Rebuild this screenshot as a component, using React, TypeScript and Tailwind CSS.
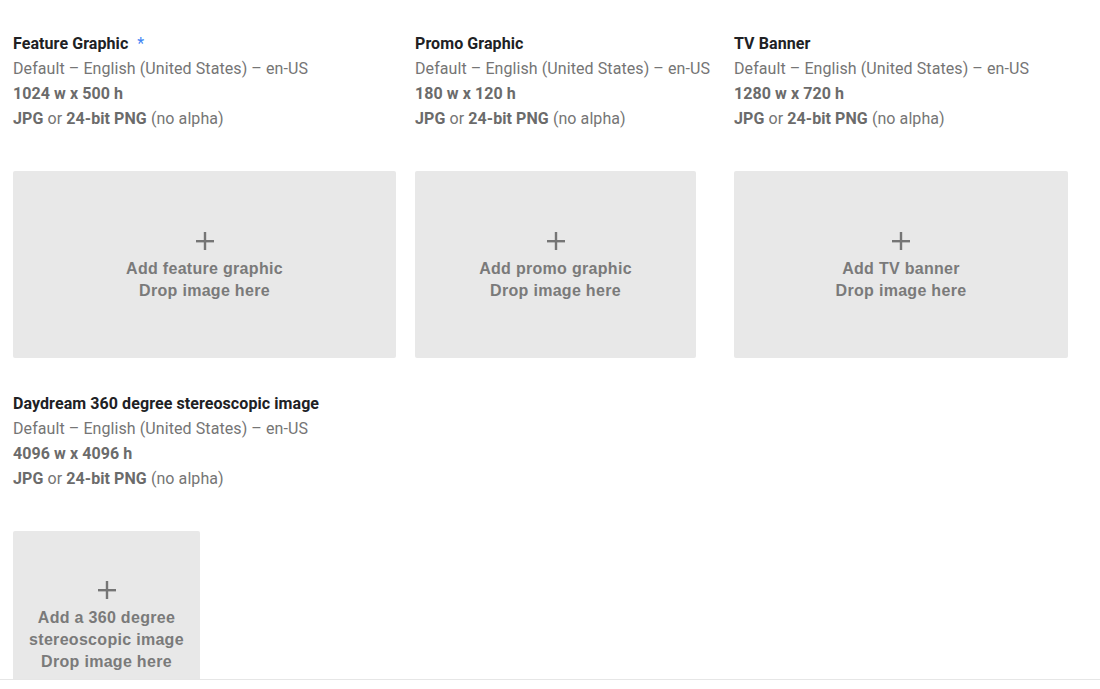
const assets = [
  [
    {
      title: "Feature Graphic",
      required: true,
      size: "1024 w x 500 h",
      box: "w-[383px]",
      col: "w-[383px]",
      lines: ["Add feature graphic"],
    },
    {
      title: "Promo Graphic",
      size: "180 w x 120 h",
      box: "w-[281px]",
      col: "w-[300px]",
      lines: ["Add promo graphic"],
    },
    {
      title: "TV Banner",
      size: "1280 w x 720 h",
      box: "w-[334px]",
      col: "w-[334px]",
      lines: ["Add TV banner"],
    },
  ],
  [
    {
      title: "Daydream 360 degree stereoscopic image",
      size: "4096 w x 4096 h",
      box: "w-[187px]",
      col: "w-[340px]",
      lines: ["Add a 360 degree", "stereoscopic image"],
    },
  ],
];

type Asset = {
  title: string;
  required?: boolean;
  size: string;
  box: string;
  col: string;
  lines: string[];
};

function Plus() {
  return (
    <svg width="18" height="18" viewBox="0 0 18 18" className="mb-[8px]">
      <rect x="0" y="8" width="18" height="2.4" fill="#757575" />
      <rect x="7.8" y="0" width="2.4" height="18" fill="#757575" />
    </svg>
  );
}

function AssetSlot({ a }: { a: Asset }) {
  return (
    <div className={`${a.col} shrink-0`}>
      <div className="text-[16px] leading-[25px] tracking-[0.08px] font-['Roboto',sans-serif]">
        <div className="font-bold text-[#202124]">
          {a.title}
          {a.required && <span className="ml-[9px] font-normal text-[#4285f4]">*</span>}
        </div>
        <div className="text-[#757575]">Default – English (United States) – en-US</div>
        <div className="font-bold text-[#6b6b6b]">{a.size}</div>
        <div className="text-[#757575]">
          <span className="font-bold text-[#6b6b6b]">JPG</span> or{" "}
          <span className="font-bold text-[#6b6b6b]">24-bit PNG</span> (no alpha)
        </div>
      </div>
      <div
        className={`${a.box} mt-[40px] flex h-[187px] flex-col items-center justify-center rounded-[2px] bg-[#e8e8e8] pt-[5px] text-center font-['Liberation_Sans',Arial,sans-serif] text-[16px] font-bold leading-[22px] tracking-[0.3px] text-[#7a7a7a]`}
      >
        <Plus />
        {a.lines.map((l) => (
          <div key={l}>{l}</div>
        ))}
        <div>Drop image here</div>
      </div>
    </div>
  );
}

export default function App() {
  return (
    <div className="h-[689px] w-[1100px] overflow-hidden bg-white">
      <div className="h-[680px] overflow-hidden border-b border-[#e6e6e6] px-[13px] pt-[31px]">
        <div className="flex flex-col gap-[33px]">
          {assets.map((row, i) => (
            <div key={i} className="flex gap-[19px]">
              {row.map((a) => (
                <AssetSlot key={a.title} a={a} />
              ))}
            </div>
          ))}
        </div>
      </div>
    </div>
  );
}
